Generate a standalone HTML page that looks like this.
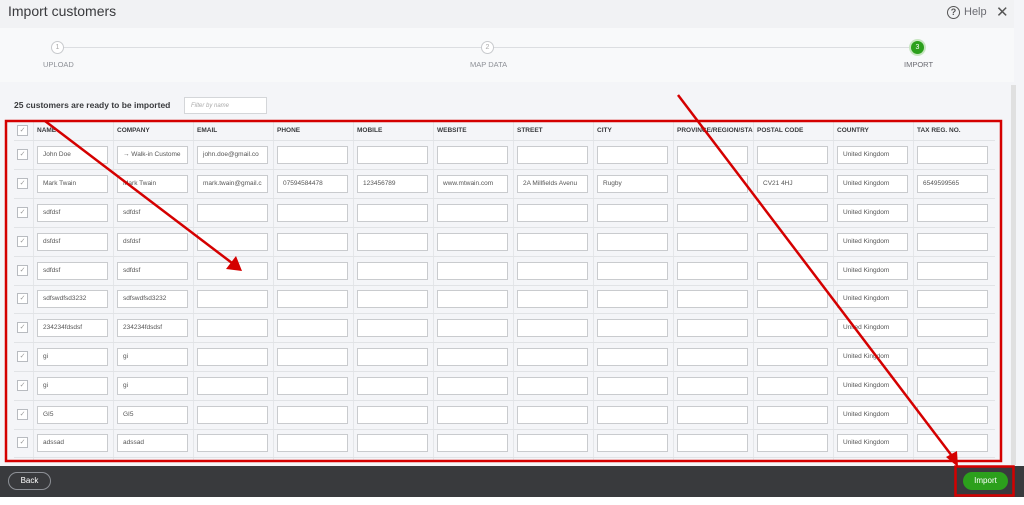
<!DOCTYPE html>
<html><head><meta charset="utf-8"><style>
*{box-sizing:border-box;margin:0;padding:0}
body{width:1024px;height:505px;overflow:hidden;background:#f4f5f8;font-family:"Liberation Sans",sans-serif;position:relative;color:#393a3d}
.a{position:absolute}
.hdr{left:0;top:0;width:1014px;height:28px;background:#f1f2f4}
.step{left:0;top:28px;width:1014px;height:54px;background:#f8f9fa}
.circ{width:13px;height:13px;border-radius:50%;border:1px solid #c8cacd;background:#fff;font-size:7px;color:#aaa;text-align:center;line-height:11px}
.slab{font-size:7.5px;color:#8d9096}
.tbl{left:14px;top:121px;width:981px;height:340px;background:#f4f5f8}
.row{position:absolute;left:0;width:981px;height:29px;border-bottom:1px solid #e1e3e6}
.cb{position:absolute;left:3px;top:8px;width:11px;height:11px;border:1px solid #b8bbc0;background:#fff;font-size:7px;color:#999;line-height:9px;text-align:center}
.in{position:absolute;top:5px;width:71px;height:18px;background:#fff;border:1px solid #c9cbce;font-size:6.5px;color:#555;padding-left:5px;line-height:16px;white-space:nowrap;overflow:hidden}
.hc{position:absolute;top:6px;font-size:6.5px;font-weight:bold;color:#393a3d;white-space:nowrap}
.vl{position:absolute;top:0;width:1px;height:340px;background:#e4e6e9}
</style></head><body>
<div class="a hdr"></div>
<div class="a" style="left:8px;top:3px;font-size:14px;color:#393a3d">Import customers</div>
<div class="a" style="left:947px;top:6px;width:13px;height:13px;border:1.5px solid #555;border-radius:50%;font-size:9px;font-weight:bold;text-align:center;line-height:10px;color:#555">?</div>
<div class="a" style="left:964px;top:6px;font-size:11px;color:#6b6c72">Help</div>
<div class="a" style="left:996px;top:3px;font-size:15px;color:#555">✕</div>
<div class="a step"></div>
<div class="a" style="left:58px;top:47px;width:860px;height:1px;background:#dcdee1"></div>
<div class="a circ" style="left:51px;top:41px">1</div>
<div class="a circ" style="left:481px;top:41px">2</div>
<div class="a" style="left:911px;top:41px;width:13px;height:13px;border-radius:50%;background:#2ca01c;box-shadow:0 0 0 2px #c7e6c0;font-size:7px;color:#fff;text-align:center;line-height:13px">3</div>
<div class="a slab" style="left:43px;top:60px">UPLOAD</div>
<div class="a slab" style="left:470px;top:60px">MAP DATA</div>
<div class="a slab" style="left:904px;top:60px;color:#6b6c72">IMPORT</div>
<div class="a" style="left:14px;top:100px;font-size:8.5px;font-weight:bold;color:#393a3d">25 customers are ready to be imported</div>
<div class="a" style="left:184px;top:97px;width:83px;height:17px;background:#fff;border:1px solid #d4d6d9;font-size:6px;font-style:italic;color:#aaa;padding:5px 0 0 6px">Filter by name</div>
<div class="a" style="left:1011px;top:85px;width:5px;height:380px;background:#e0e0e0"></div>
<div class="a tbl">
<div class="vl" style="left:19px"></div><div class="vl" style="left:99px"></div><div class="vl" style="left:179px"></div><div class="vl" style="left:259px"></div><div class="vl" style="left:339px"></div><div class="vl" style="left:419px"></div><div class="vl" style="left:499px"></div><div class="vl" style="left:579px"></div><div class="vl" style="left:659px"></div><div class="vl" style="left:739px"></div><div class="vl" style="left:819px"></div><div class="vl" style="left:899px"></div>
<div class="row" style="top:0;height:20px"><div class="cb" style="top:4px">✓</div>
<span class="hc" style="left:23px">NAME</span><span class="hc" style="left:103px">COMPANY</span><span class="hc" style="left:183px">EMAIL</span><span class="hc" style="left:263px">PHONE</span><span class="hc" style="left:343px">MOBILE</span><span class="hc" style="left:423px">WEBSITE</span><span class="hc" style="left:503px">STREET</span><span class="hc" style="left:583px">CITY</span><span class="hc" style="left:663px">PROVINCE/REGION/STA</span><span class="hc" style="left:743px">POSTAL CODE</span><span class="hc" style="left:823px">COUNTRY</span><span class="hc" style="left:903px">TAX REG. NO.</span></div>
<div class="row" style="top:20px"><div class="cb">✓</div><div class="in" style="left:23px">John Doe</div><div class="in" style="left:103px">→ Walk-in Custome</div><div class="in" style="left:183px">john.doe@gmail.co</div><div class="in" style="left:263px"></div><div class="in" style="left:343px"></div><div class="in" style="left:423px"></div><div class="in" style="left:503px"></div><div class="in" style="left:583px"></div><div class="in" style="left:663px"></div><div class="in" style="left:743px"></div><div class="in" style="left:823px">United Kingdom</div><div class="in" style="left:903px"></div></div>
<div class="row" style="top:49px"><div class="cb">✓</div><div class="in" style="left:23px">Mark Twain</div><div class="in" style="left:103px">Mark Twain</div><div class="in" style="left:183px">mark.twain@gmail.c</div><div class="in" style="left:263px">07594584478</div><div class="in" style="left:343px">123456789</div><div class="in" style="left:423px">www.mtwain.com</div><div class="in" style="left:503px">2A Millfields Avenu</div><div class="in" style="left:583px">Rugby</div><div class="in" style="left:663px"></div><div class="in" style="left:743px">CV21 4HJ</div><div class="in" style="left:823px">United Kingdom</div><div class="in" style="left:903px">6549599565</div></div>
<div class="row" style="top:78px"><div class="cb">✓</div><div class="in" style="left:23px">sdfdsf</div><div class="in" style="left:103px">sdfdsf</div><div class="in" style="left:183px"></div><div class="in" style="left:263px"></div><div class="in" style="left:343px"></div><div class="in" style="left:423px"></div><div class="in" style="left:503px"></div><div class="in" style="left:583px"></div><div class="in" style="left:663px"></div><div class="in" style="left:743px"></div><div class="in" style="left:823px">United Kingdom</div><div class="in" style="left:903px"></div></div>
<div class="row" style="top:107px"><div class="cb">✓</div><div class="in" style="left:23px">dsfdsf</div><div class="in" style="left:103px">dsfdsf</div><div class="in" style="left:183px"></div><div class="in" style="left:263px"></div><div class="in" style="left:343px"></div><div class="in" style="left:423px"></div><div class="in" style="left:503px"></div><div class="in" style="left:583px"></div><div class="in" style="left:663px"></div><div class="in" style="left:743px"></div><div class="in" style="left:823px">United Kingdom</div><div class="in" style="left:903px"></div></div>
<div class="row" style="top:136px"><div class="cb">✓</div><div class="in" style="left:23px">sdfdsf</div><div class="in" style="left:103px">sdfdsf</div><div class="in" style="left:183px"></div><div class="in" style="left:263px"></div><div class="in" style="left:343px"></div><div class="in" style="left:423px"></div><div class="in" style="left:503px"></div><div class="in" style="left:583px"></div><div class="in" style="left:663px"></div><div class="in" style="left:743px"></div><div class="in" style="left:823px">United Kingdom</div><div class="in" style="left:903px"></div></div>
<div class="row" style="top:164px"><div class="cb">✓</div><div class="in" style="left:23px">sdfswdfsd3232</div><div class="in" style="left:103px">sdfswdfsd3232</div><div class="in" style="left:183px"></div><div class="in" style="left:263px"></div><div class="in" style="left:343px"></div><div class="in" style="left:423px"></div><div class="in" style="left:503px"></div><div class="in" style="left:583px"></div><div class="in" style="left:663px"></div><div class="in" style="left:743px"></div><div class="in" style="left:823px">United Kingdom</div><div class="in" style="left:903px"></div></div>
<div class="row" style="top:193px"><div class="cb">✓</div><div class="in" style="left:23px">234234fdsdsf</div><div class="in" style="left:103px">234234fdsdsf</div><div class="in" style="left:183px"></div><div class="in" style="left:263px"></div><div class="in" style="left:343px"></div><div class="in" style="left:423px"></div><div class="in" style="left:503px"></div><div class="in" style="left:583px"></div><div class="in" style="left:663px"></div><div class="in" style="left:743px"></div><div class="in" style="left:823px">United Kingdom</div><div class="in" style="left:903px"></div></div>
<div class="row" style="top:222px"><div class="cb">✓</div><div class="in" style="left:23px">gi</div><div class="in" style="left:103px">gi</div><div class="in" style="left:183px"></div><div class="in" style="left:263px"></div><div class="in" style="left:343px"></div><div class="in" style="left:423px"></div><div class="in" style="left:503px"></div><div class="in" style="left:583px"></div><div class="in" style="left:663px"></div><div class="in" style="left:743px"></div><div class="in" style="left:823px">United Kingdom</div><div class="in" style="left:903px"></div></div>
<div class="row" style="top:251px"><div class="cb">✓</div><div class="in" style="left:23px">gi</div><div class="in" style="left:103px">gi</div><div class="in" style="left:183px"></div><div class="in" style="left:263px"></div><div class="in" style="left:343px"></div><div class="in" style="left:423px"></div><div class="in" style="left:503px"></div><div class="in" style="left:583px"></div><div class="in" style="left:663px"></div><div class="in" style="left:743px"></div><div class="in" style="left:823px">United Kingdom</div><div class="in" style="left:903px"></div></div>
<div class="row" style="top:280px"><div class="cb">✓</div><div class="in" style="left:23px">GI5</div><div class="in" style="left:103px">GI5</div><div class="in" style="left:183px"></div><div class="in" style="left:263px"></div><div class="in" style="left:343px"></div><div class="in" style="left:423px"></div><div class="in" style="left:503px"></div><div class="in" style="left:583px"></div><div class="in" style="left:663px"></div><div class="in" style="left:743px"></div><div class="in" style="left:823px">United Kingdom</div><div class="in" style="left:903px"></div></div>
<div class="row" style="top:308px"><div class="cb">✓</div><div class="in" style="left:23px">adssad</div><div class="in" style="left:103px">adssad</div><div class="in" style="left:183px"></div><div class="in" style="left:263px"></div><div class="in" style="left:343px"></div><div class="in" style="left:423px"></div><div class="in" style="left:503px"></div><div class="in" style="left:583px"></div><div class="in" style="left:663px"></div><div class="in" style="left:743px"></div><div class="in" style="left:823px">United Kingdom</div><div class="in" style="left:903px"></div></div>
</div>
<div class="a" style="left:0;top:466px;width:1024px;height:31px;background:#393a3d"></div>
<div class="a" style="left:8px;top:472px;width:43px;height:18px;border:1px solid #8d9096;border-radius:9px;color:#fff;font-size:8px;text-align:center;line-height:16px">Back</div>
<div class="a" style="left:963px;top:472px;width:45px;height:18px;background:#2ca01c;border-radius:9px;color:#fff;font-size:8px;text-align:center;line-height:18px">Import</div>
<div class="a" style="left:0;top:497px;width:1024px;height:8px;background:#fff"></div>
<svg class="a" style="left:0;top:0" width="1024" height="505">
<rect x="6" y="121" width="995" height="340" fill="none" stroke="#d40000" stroke-width="2.5"/>
<rect x="955.5" y="466.5" width="58" height="29" fill="none" stroke="#d40000" stroke-width="2.5"/>
<g stroke="#d40000" stroke-width="2.5" fill="#d40000">
<line x1="45" y1="121" x2="232" y2="263"/>
<polygon points="242,271 226,269 236,256" stroke="none"/>
<line x1="678" y1="95" x2="952" y2="456"/>
<polygon points="958,467 946,457 957,451" stroke="none"/>
</g>
</svg>
</body></html>
